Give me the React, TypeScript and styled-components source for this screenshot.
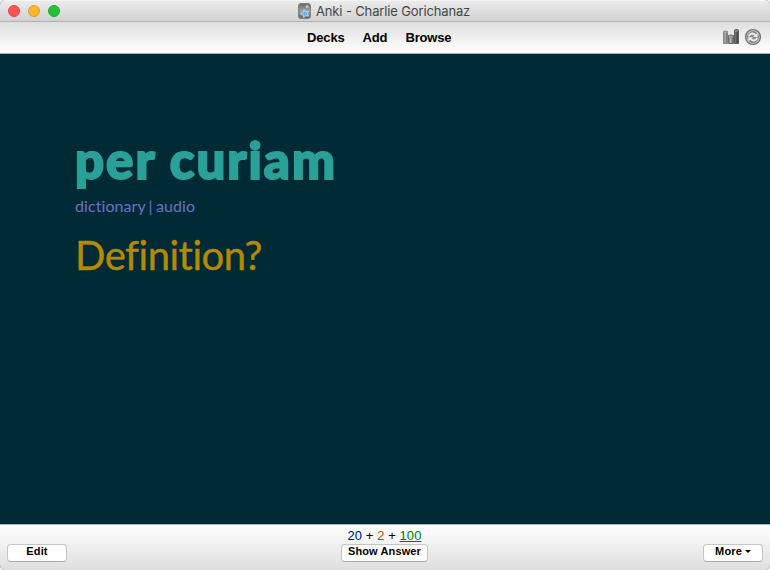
import React from 'react';
import styled, { createGlobalStyle } from 'styled-components';

const GlobalStyle = createGlobalStyle`
  * { box-sizing: border-box; }
  body { margin: 0; background: #fff; }
`;

const Window = styled.div`
  width: 770px;
  height: 570px;
  display: flex;
  flex-direction: column;
  overflow: hidden;
  border-radius: 5px;
  background: #002b36;
  font-family: 'Liberation Sans', Arial, sans-serif;
  font-size: 13px;
  white-space: nowrap;
`;

const TitleBar = styled.header`
  height: 22px;
  flex: none;
  display: grid;
  grid-template-columns: 298px 1fr;
  align-items: center;
  background: linear-gradient(#ebebeb, #d1d1d1);
  border-top: 1px solid #f5f5f5;
  border-bottom: 1px solid #b1b1b1;
`;

const Lights = styled.div`
  display: flex;
  gap: 8px;
  padding-left: 8px;
`;

const Light = styled.span<{ $fill: string; $edge: string }>`
  width: 12px;
  height: 12px;
  border-radius: 50%;
  background: ${(p) => p.$fill};
  border: 1px solid ${(p) => p.$edge};
`;

const Title = styled.div`
  display: flex;
  align-items: center;
  gap: 5px;
  color: #464646;
  font: 13px/18px Inter, sans-serif;
  letter-spacing: -0.14px;
  svg { flex: none; }
`;

const Toolbar = styled.nav`
  height: 32px;
  flex: none;
  display: grid;
  grid-template-columns: 307px 1fr auto;
  padding-right: 8px;
  background: linear-gradient(#dedede, #fff);
  border-bottom: 1px solid #a9b4b7;
`;

const Links = styled.div`
  grid-column: 2;
  display: flex;
  gap: 18px;
  font-weight: bold;
  line-height: 31px;
  letter-spacing: -0.15px;
  color: #000;
`;

const Tools = styled.div`
  display: flex;
  gap: 4px;
  padding-top: 6px;
`;

const Card = styled.main`
  flex: 1;
  padding: 75px 75px 0;
  font-family: Lato, sans-serif;
  font-variant-ligatures: none;
`;

const Term = styled.h1`
  margin: 0;
  height: 67px;
  font-size: 51px;
  line-height: 62px;
  font-weight: 900;
  letter-spacing: 2px;
  -webkit-text-stroke: 2px #2aa198;
  color: #2aa198;
`;

const Sources = styled.div`
  height: 34px;
  font-size: 16px;
  line-height: 20px;
  letter-spacing: 0.08px;
  word-spacing: -1px;
  color: #6c71c4;
`;

const Prompt = styled.div`
  font-size: 40px;
  line-height: 50px;
  letter-spacing: -0.5px;
  -webkit-text-stroke: 0.4px #b58900;
  color: #b58900;
`;

const Footer = styled.footer`
  height: 46px;
  flex: none;
  display: grid;
  grid-template-columns: 1fr 87px 1fr;
  align-items: start;
  padding: 0 7px 0 6px;
  background: linear-gradient(#fff, #dedede);
  border-top: 1px solid #a9b4b7;
`;

const Side = styled.div<{ $end?: boolean }>`
  display: flex;
  justify-content: ${(p) => (p.$end ? 'flex-end' : 'flex-start')};
  padding: 19px 0 0 ${(p) => (p.$end ? 0 : 1)}px;
`;

const Center = styled.div`
  display: flex;
  flex-direction: column;
  align-items: center;
`;

const Counts = styled.div`
  height: 19px;
  line-height: 22px;
  letter-spacing: 0.08px;
`;

const Count = styled.span<{ $color: string; $active?: boolean }>`
  color: ${(p) => p.$color};
  text-decoration: ${(p) => (p.$active ? 'underline' : 'none')};
`;

const Button = styled.button<{ $width: number }>`
  width: ${(p) => p.$width}px;
  height: 18px;
  padding: 0 0 3px;
  display: flex;
  align-items: center;
  justify-content: center;
  gap: 3px;
  border: 1px solid #c5c5c5;
  border-bottom-color: #aaa;
  border-radius: 4px;
  background: #fff;
  color: #000;
  font: bold 11px/13px 'Liberation Sans', Arial, sans-serif;
  letter-spacing: 0.12px;
`;

const AppIcon = () => (
  <svg width="13" height="16" viewBox="0 0 13 16">
    <defs>
      <linearGradient id="case" x2="0" y2="1">
        <stop stopColor="#666" />
        <stop offset=".5" stopColor="#a0a0a0" />
        <stop offset="1" stopColor="#606060" />
      </linearGradient>
    </defs>
    <rect x=".5" y=".5" width="12" height="15" rx="2.5" fill="url(#case)" stroke="#808080" />
    <path d="M6 6.5l1.5 2.2 3-.3-1.1 2.5 1.3 2.2-2.9-.3-2.1 1.8-.5-2.7-2.7-1.2 2.5-1.3z" fill="#62b9f4" stroke="#d5e6ee" strokeWidth=".7" />
    <path d="M8.7 1.5l.7 1.1 1.4-.1-.6 1.1.5 1.2-1.3-.3-1 .9-.2-1.3-1.1-.7 1.3-.5z" fill="#b8d8e8" />
  </svg>
);

const StatsIcon = () => (
  <svg width="18" height="18" viewBox="0 0 18 18">
    <defs>
      <linearGradient id="bar">
        <stop stopColor="#777" />
        <stop offset=".4" stopColor="#b5b5b5" />
        <stop offset="1" stopColor="#555" />
      </linearGradient>
      <linearGradient id="darkBar">
        <stop stopColor="#888" />
        <stop offset="1" stopColor="#333" />
      </linearGradient>
    </defs>
    <path d="M1.5 3.5q2-1 4 0v12h-4z" fill="url(#bar)" stroke="#888" />
    <path d="M6.5 7.5q2.5-1 5 0v8h-5z" fill="url(#bar)" stroke="#6b6b6b" />
    <path d="M12.5 2q2-1 4 0v13.5h-4z" fill="url(#darkBar)" stroke="#5a5a5a" />
    <path d="M2 4.5h3M7 8.5h4M13 3h3" stroke="#aaa" />
  </svg>
);

const SyncIcon = () => (
  <svg width="18" height="18" viewBox="0 0 18 18" fill="none">
    <circle cx="9" cy="9" r="7.4" fill="#d8d8d8" stroke="#707070" strokeWidth="1.4" />
    <circle cx="9" cy="9" r="5.5" fill="#8c8c8c" stroke="#777" strokeWidth=".8" />
    <path d="M4.8 8.4c.7-3 4.2-3.8 6.3-1.6M13.2 9.6c-.7 3-4.2 3.8-6.3 1.6" stroke="#f2f2f2" strokeWidth="1.8" />
    <path d="M8.8 8.7h4.8V4.8zM9.2 9.3H4.4v3.9z" fill="#f2f2f2" />
  </svg>
);

const Caret = () => (
  <svg width="6" height="3" viewBox="0 0 6 3">
    <path d="M0 0h6L3 3z" />
  </svg>
);

export default function App() {
  return (
    <>
      <GlobalStyle />
      <Window>
        <TitleBar>
          <Lights>
            <Light $fill="#fc5652" $edge="#df4642" />
            <Light $fill="#fdb52b" $edge="#df9c25" />
            <Light $fill="#27c138" $edge="#1daa2b" />
          </Lights>
          <Title><AppIcon /><span>Anki - Charlie Gorichanaz</span></Title>
        </TitleBar>
        <Toolbar>
          <Links><span>Decks</span><span>Add</span><span>Browse</span></Links>
          <Tools><StatsIcon /><SyncIcon /></Tools>
        </Toolbar>
        <Card>
          <Term>per curiam</Term>
          <Sources>dictionary | audio</Sources>
          <Prompt>Definition?</Prompt>
        </Card>
        <Footer>
          <Side><Button $width={60}>Edit</Button></Side>
          <Center>
            <Counts>
              <Count $color="#000099">20</Count> + <Count $color="#cc4400">2</Count> + <Count $color="#007700" $active>100</Count>
            </Counts>
            <Button $width={87}>Show Answer</Button>
          </Center>
          <Side $end><Button $width={60}>More <Caret /></Button></Side>
        </Footer>
      </Window>
    </>
  );
}
